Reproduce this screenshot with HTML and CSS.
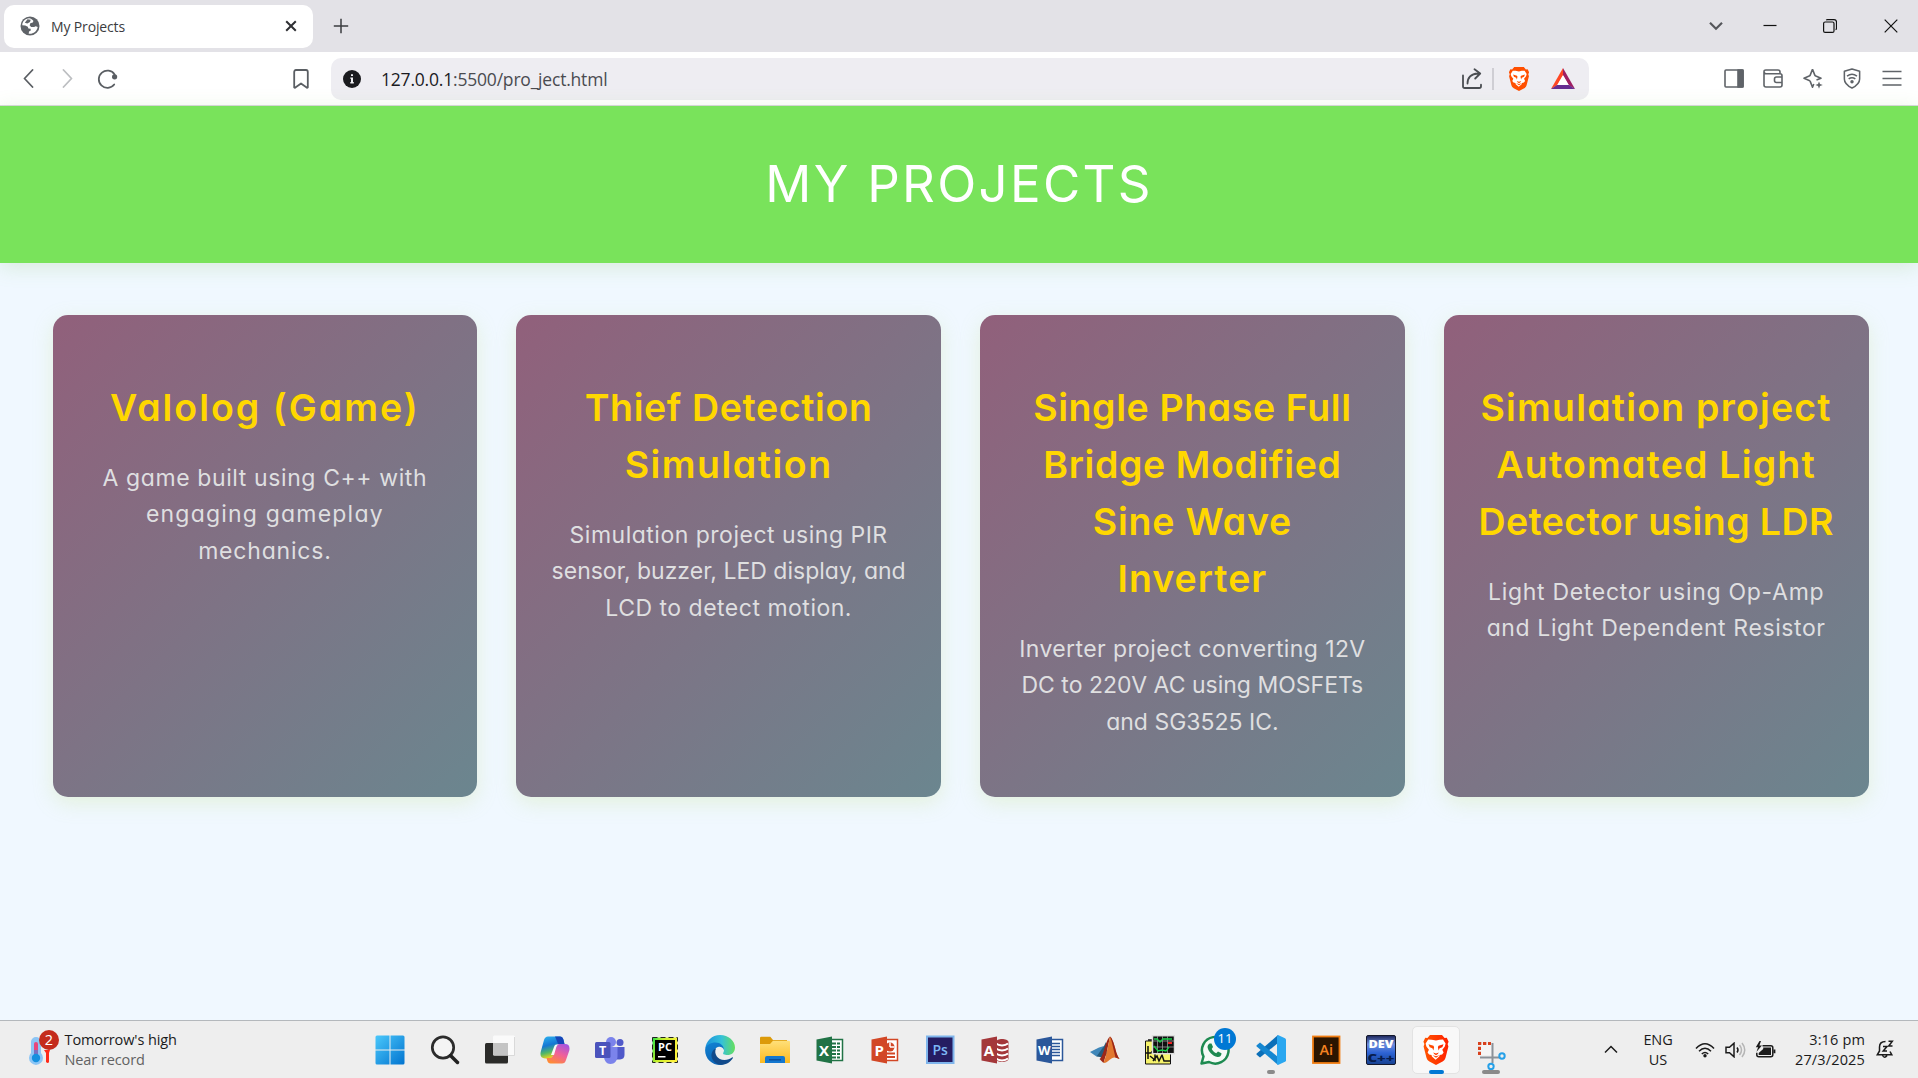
FILE: index.html
```html
<!DOCTYPE html>
<html lang="en">
<head>
<meta charset="utf-8">
<title>My Projects</title>
<link rel="stylesheet" href="styles.css">
</head>
<body>
<svg class="defs" width="0" height="0" aria-hidden="true">
  <defs>
    <linearGradient id="gBrave" x1="0" x2="1"><stop offset="0" stop-color="#ff5500"/><stop offset="1" stop-color="#ff2000"/></linearGradient>
    <symbol id="lion" viewBox="0 0 26 30">
      <path d="M7 0h12l2.600 3 2.200-.3 1.800 4-1 2.300.8 2.600-2.800 11c-.5 2-1.600 3-3 4L13 30l-6.600-3.400c-1.400-1-2.500-2-3-4L.6 11.600 1.400 9l-1-2.300 1.800-4 2.200.3z"/>
      <path fill="#fff" d="M13 5.500l3.500-.7 3.500-.2 2.600 4-.8 3-2.500 3.200 1.300 2.700-1.500 2-2.400.4-.4 1.600-3.700 3.300-3.700-3.300-.4-1.600-2.400-.4-1.500-2 1.300-2.700-2.500-3.200-.8-3 2.600-4 3.500.2z"/>
      <path d="M5.500 9.300l5 1.500.6 1.500-.7 3.200-1-2.200-2.700-1zM20.500 9.300l-5 1.500-.6 1.500.7 3.200 1-2.200 2.700-1zM10.200 17.500l2.800 1 2.800-1-1 1.500-1.800 1.300-1.800-1.300zM9.500 20.200l3.500 1 3.500-1-3.500 2.600z"/>
    </symbol>
  </defs>
</svg>

<div class="window">
  <header class="tabstrip">
    <div class="tab">
      <svg class="globe" viewBox="0 0 20 20"><circle cx="10" cy="10" r="9.500" fill="#5f6368"/><path fill="#fff" d="M9 2.300C6 2.600 3.400 4.500 2.400 7.400L2.200 9.300l3 .2 2.600 1.300.6 1.700 2.200.3.200 1.700-1.800 1-.3 2.200c4.300.6 8.200-2.300 9-6.700l-2-.8-1.600.9-3-.1-1.500-1.800.9-2.200 2-.3 1-1.600C12.400 3.600 11 2.500 9 2.300z"/><path fill="#5f6368" d="M7.500 3.200l3.200.5-.7 2.400-2.600 1.400-2.600-.8z"/></svg>
      <span class="tab-title">My Projects</span>
      <svg class="tab-close" viewBox="0 0 12 12"><path d="M1.200 1.200l9.600 9.600M10.800 1.200l-9.600 9.600"/></svg>
    </div>
    <svg class="new-tab" viewBox="0 0 16 16"><path d="M8 .8v14.400M.8 8h14.400"/></svg>
    <div class="window-buttons">
      <svg viewBox="0 0 14 14"><path class="thick" d="M1 3.800l6 6 6-6"/></svg>
      <svg viewBox="0 0 14 14"><path d="M.5 6.500h13"/></svg>
      <svg viewBox="0 0 14 14"><rect x=".6" y="3" width="10.400" height="10.400" rx="1.500"/><path d="M3.300 1.200Q3.600.6 4.500.6h6.500q2.500 0 2.500 2.500v6.200q0 1-.9 1.400"/></svg>
      <svg viewBox="0 0 14 14"><path d="M.7.7l12.600 12.600M13.300.7L.7 13.300"/></svg>
    </div>
  </header>

  <nav class="toolbar">
    <div class="nav-left">
      <svg class="i-back" viewBox="0 0 11 19"><path d="M9.500 1L1.500 9.500l8 8.500"/></svg>
      <svg class="i-fwd" viewBox="0 0 11 19"><path d="M1.500 1l8 8.500-8 8.500"/></svg>
      <svg class="i-reload" viewBox="0 0 21 20"><path d="M17.200 15.500A8.600 8.600 0 1 1 17.600 5.500"/><circle cx="17.600" cy="7.800" r="2.600"/></svg>
      <svg class="i-bookmark" viewBox="0 0 16 20"><path d="M1.200 18.500V3Q1.200 1 3 1h10q1.800 0 1.800 2v15.500l-.8.300L8 14.500 2 18.800z"/></svg>
    </div>
    <div class="address">
      <svg class="i-info" viewBox="0 0 18 18"><circle cx="9" cy="9" r="9" fill="#1b1b1f"/><path fill="#f0f0f4" d="M8 4.300h2v1.800H8zM7.300 7.500H10v4.600h.8v1.300H7.300v-1.300H8V8.800h-.7z"/></svg>
      <span class="url"><b>127.0.0.1</b>:5500/pro_ject.html</span>
      <svg class="i-share" viewBox="0 0 21 21"><path d="M1 7.500v10.700Q1 20 2.800 20h14.400q1.800 0 1.800-1.800v-1.500M5.500 15.500c0-6 3.500-9.500 10.500-10M12.500 1.200l5.700 4.300-5 5"/></svg>
      <i class="divider"></i>
      <svg class="i-lion" viewBox="0 0 26 30"><use href="#lion"/></svg>
      <svg class="i-bat" viewBox="0 0 24 21"><path fill="#ff4724" d="M12 0v7.500L6.500 17 0 21z"/><path fill="#9e1f63" d="M12 0l12 21-6.500-4L12 7.500z"/><path fill="#662d91" d="M0 21l6-4h12l6 4z"/><path fill="#fff" d="M12 7l5.800 10H6.200z"/></svg>
    </div>
    <div class="nav-right">
      <svg viewBox="0 0 20 20"><rect x="1" y="1.500" width="18" height="17" rx="1"/><path d="M14 1.500h5v17h-5z" fill="#5f6368"/></svg>
      <svg viewBox="0 0 20 20"><path d="M1 3.500v13Q1 18.500 3 18.500h14q2 0 2-2V7.200q0-2-2-2H3Q1 5.200 1 3.300T3 1.500h12q2 0 2 2v1.700M19 8.500h-5.500q-2 0-2 2v1.500q0 2 2 2H19"/></svg>
      <svg viewBox="0 0 20 20"><path d="M9.500.8l2.200 5.600q.3.800 1.100 1.200L18 9.800l-4.500 1.600M9.500.8L7.300 6.400Q7 7.200 6.200 7.600L1 9.800l5.200 2.100q.8.400 1.100 1.200l2.200 5.600 1.300-3.200"/><path class="solid" d="M16 13l1 2.500 2.800 1-2.800 1-1 2.700-1-2.700-2.700-1 2.700-1z"/></svg>
      <svg viewBox="0 0 20 22"><path d="M10 1l8 2.500v8c0 5-4 7.500-8 9.500-4-2-8-4.500-8-9.500v-8zM4.800 8.500q5.200-4 10.400 0M6.500 11.500q3.500-2.600 7 0"/><circle class="solid" cx="10" cy="14.500" r="1.800"/></svg>
      <svg viewBox="0 0 20 20"><path d="M.5 3h19M.5 10h19M.5 16.500h19"/></svg>
    </div>
  </nav>

  <main class="page">
    <div class="banner"><h1>MY PROJECTS</h1></div>
    <section class="cards">
      <article class="card">
        <h2><span class="track-20">Valolog (Game)</span></h2>
        <p><span class="track-6">A game built using C++ with</span><span class="track-12">engaging gameplay</span><span class="track-8">mechanics.</span></p>
      </article>
      <article class="card">
        <h2><span class="track-6">Thief Detection</span><span class="track-15">Simulation</span></h2>
        <p><span class="track-5">Simulation project using PIR</span><span>sensor, buzzer, LED display, and</span><span class="track-5">LCD to detect motion.</span></p>
      </article>
      <article class="card">
        <h2><span class="track-6">Single Phase Full</span><span class="track-6">Bridge Modified</span><span class="track-8">Sine Wave</span><span class="track-10">Inverter</span></h2>
        <p><span class="track-4">Inverter project converting 12V</span><span>DC to 220V AC using MOSFETs</span><span>and SG3525 IC.</span></p>
      </article>
      <article class="card">
        <h2><span class="track-12">Simulation project</span><span class="track-12">Automated Light</span><span class="track-4">Detector using LDR</span></h2>
        <p><span class="track-7">Light Detector using Op-Amp</span><span class="track-6">and Light Dependent Resistor</span></p>
      </article>
    </section>
  </main>

  <footer class="taskbar">
    <div class="weather">
      <svg viewBox="0 0 32 36">
        <path fill="#8cc5f5" d="M3 12a5 5 0 0 1 10 0v11a7 7 0 1 1-10 0z"/>
        <path fill="#e8467c" d="M6 14a2 2 0 0 1 4 0v12H6z"/><path fill="#7a6fc0" d="M6 20h4v6H6z"/><circle cx="8" cy="28" r="4.200" fill="#1490df"/>
        <path fill="#ff2a1a" d="M16 20h6l-1 3v9q-1 2-3 0v-9z"/>
        <circle cx="21" cy="10" r="10" fill="#c42b1c"/>
        <text x="21" y="15" font-size="14.500" fill="#fff" text-anchor="middle">2</text>
      </svg>
      <div class="weather-text"><span>Tomorrow's high</span><span class="muted">Near record</span></div>
    </div>

    <div class="apps">
      <div class="app"><svg viewBox="0 0 30 30"><defs><linearGradient id="gWin" x1="0" y1="0" x2="30" y2="30" gradientUnits="userSpaceOnUse"><stop offset="0" stop-color="#4cc9fb"/><stop offset="1" stop-color="#0072cf"/></linearGradient></defs><path fill="url(#gWin)" d="M.5 2q0-1.500 1.500-1.500h12.500v14H.5zM15.500.5H28q1.500 0 1.500 1.500v12.500h-14zM.5 15.500h14v14H2q-1.500 0-1.500-1.500zM15.500 15.500h14V28q0 1.500-1.500 1.500H15.500z"/></svg></div>
      <div class="app"><svg viewBox="0 0 30 30"><circle cx="13" cy="12.500" r="10.700" fill="#f4f4f4" stroke="#2c2c2c" stroke-width="2.700"/><path d="M20.500 20.500l7 7" stroke="#222" stroke-width="3.500" stroke-linecap="round"/></svg></div>
      <div class="app"><svg viewBox="0 0 30 30"><rect y="8" width="23" height="20.500" rx="1.500" fill="#2b2b29"/><rect x="8" y=".5" width="22" height="20" rx="1.500" fill="#fafafa"/><path fill="#c4c4c4" d="M8 8h15v12.500H9.500Q8 20.500 8 19z"/><path fill="none" stroke="#d9d9d9" d="M23 20.500h6.500V2"/></svg></div>
      <div class="app"><svg viewBox="0 0 30 28"><defs><linearGradient id="gC1" x1="0" y1="0" x2=".3" y2="1"><stop offset="0" stop-color="#2fb6f0"/><stop offset=".45" stop-color="#1577d4"/><stop offset=".75" stop-color="#52b865"/><stop offset="1" stop-color="#f2d41c"/></linearGradient><linearGradient id="gC2" x1=".8" y1="0" x2=".3" y2="1"><stop offset="0" stop-color="#a455e0"/><stop offset=".5" stop-color="#f0609a"/><stop offset="1" stop-color="#ff8b35"/></linearGradient></defs><path fill="url(#gC1)" d="M8 .5h12q2.500 0 3.400 3l1.200 5H19q-2 0-2.700 2.500L13 20q-1 2.500-3 2.500H5Q-.5 22.500.7 16L4 4Q5 .5 8 .5z"/><path fill="#1746b8" d="M15 .5h5q2.500 0 3.400 3l1.200 5H19q-1.500 0-1.500-2z"/><path fill="url(#gC2)" d="M22 27.500H10.500q-2.500 0-3.300-3L6.500 22H10q2.200 0 3-2.500L16.500 10q.7-2 2.500-2h6q5.500 0 4.300 6.500L26 24q-1 3.500-4 3.500z"/><path fill="#f8f8f8" d="M16 8.500h3q-2 0-2.700 2.500L14 19h-3l3-8q.6-2.500 2-2.500z"/></svg></div>
      <div class="app"><svg viewBox="0 0 30 28"><circle cx="25" cy="6.500" r="3.500" fill="#5059c9"/><path fill="#5059c9" d="M20 11h9.500v8q0 4-4.500 4.500h-4z"/><circle cx="16" cy="6" r="5" fill="#7b83eb"/><path fill="#7b83eb" d="M9 11h13.500v9c0 4.500-3 8-7 8s-6.500-3.500-6.500-8z"/><rect y="6" width="15.500" height="16" rx="1.500" fill="#4b53bc"/><text x="7.700" y="18.500" font-size="12.500" font-weight="700" fill="#fff" text-anchor="middle">T</text></svg></div>
      <div class="app"><svg viewBox="0 0 30 30"><defs><linearGradient id="gPc" x2="1" y2=".3"><stop offset="0" stop-color="#21e04a"/><stop offset=".4" stop-color="#c4ee2b"/><stop offset="1" stop-color="#fcf23a"/></linearGradient></defs><rect x="2.500" y="2.500" width="25" height="25" fill="url(#gPc)" stroke="#222" stroke-dasharray="5 3"/><rect x="5" y="5" width="20" height="20"/><text x="15" y="15.500" font-size="11" font-weight="700" fill="#fff" text-anchor="middle">PC</text><path fill="#fff" d="M8 21h7.500v1.500H8z"/></svg></div>
      <div class="app"><svg viewBox="0 0 30 30"><defs><linearGradient id="gE1" x1="0" x2="1" y1=".3" y2=".3"><stop offset="0" stop-color="#1a91dc"/><stop offset=".55" stop-color="#35c1d8"/><stop offset="1" stop-color="#66df5d"/></linearGradient><linearGradient id="gE2" y2="1" x2=".3"><stop offset="0" stop-color="#1183d4"/><stop offset="1" stop-color="#0c64b5"/></linearGradient></defs><path fill="url(#gE1)" d="M.3 13.500C1 6 7 0 15 0c8.500 0 15 6 15 12.500 0 5-3.500 7.500-7.500 7.500-3.300 0-5-1-4.200-2.300 2.300-4-1-7.200-5-7.200C8 10.500 3 11 .3 13.500z"/><path fill="url(#gE2)" d="M.1 15C.3 10 6 7.500 10.500 7.500c5 0 8.700 3.500 8.500 7.500-1-2.500-3-3.500-5-3.300-4 .3-5.500 5-4.500 9 1.200 4.800 4.500 7.800 9 9C8.500 31.500 0 24.500.1 15z"/><path fill="#114a8b" d="M11 13.500c-2.500 5 1.500 11.500 8.500 11.500 3 0 5.500-1 7.500-2.500.7-.5 1.200.2.800.8-2.300 3.800-6.500 6.500-11.500 6.500-7 0-12-7.500-9-13 .8-1.600 2-2.700 3.700-3.300z"/></svg></div>
      <div class="app"><svg viewBox="0 0 30 28"><defs><linearGradient id="gF" y2="1" x2="0"><stop offset="0" stop-color="#ffe07a"/><stop offset="1" stop-color="#fcb91f"/></linearGradient></defs><path fill="#dc9a0a" d="M0 2Q0 .7 1.300.7h9L13 4h14v6H0z"/><path fill="url(#gF)" d="M0 8h10l3-3.300h15.700Q30 4.700 30 6v20.500Q30 27 29 27H0z"/><path fill="#1377cf" d="M5 27v-5q0-2 2-2h16q2 0 2 2v5z"/><path fill="#0a4f9c" d="M9 23h12v1.500H9z"/></svg></div>
      <div class="app"><svg viewBox="0 0 30 30"><path fill="#fff" stroke="#217346" stroke-width="1.500" d="M15 4.500h12.500v21H15z"/><path stroke="#217346" stroke-width="2" d="M17 8.500h8M17 12h8M17 15.500h8M17 19h8M17 22.500h8"/><path stroke="#fff" d="M21.500 7v17"/><path fill="#217346" d="M1.500 4.500L17 1.500v27l-15.500-3z"/><text x="9" y="20.500" font-size="15" font-weight="700" fill="#fff" text-anchor="middle">X</text></svg></div>
      <div class="app"><svg viewBox="0 0 30 30"><path fill="#fff" stroke="#d24726" stroke-width="1.500" d="M15 4.500h12.500v21H15z"/><circle cx="20" cy="12" r="4.500" fill="#d24726"/><path d="M20 12V7.500M20 12h4.500" stroke="#fff" stroke-width="1.500"/><path stroke="#d24726" stroke-width="2" d="M17 18.500h8M17 22h8"/><path fill="#d24726" d="M1.500 4.500L17 1.500v27l-15.500-3z"/><text x="9.300" y="20.500" font-size="15" font-weight="700" fill="#fff" text-anchor="middle">P</text></svg></div>
      <div class="app"><svg viewBox="0 0 30 30"><rect x="2" y="1.500" width="26.500" height="26.500" fill="#251d62" stroke="#7fb5ec" stroke-width="2"/><text x="15.200" y="19.500" font-size="14" font-weight="600" fill="#7db8f5" text-anchor="middle">Ps</text></svg></div>
      <div class="app"><svg viewBox="0 0 30 30"><path fill="#a4373a" d="M16 7c0-4 12-4 12.500 0v17c-.5 4-12.500 4-12.500 0z"/><path fill="none" stroke="#fff" stroke-width="2" d="M16 8.500c3 2.500 9 2.500 12 0M16 13.500c3 2.500 9 2.500 12 0M16 18.500c3 2.500 9 2.500 12 0M16 23.500c3 2.500 9 2.500 12 0"/><path fill="#a4373a" d="M1.500 4.500L17 1.500v27l-15.500-3z"/><text x="9" y="20.500" font-size="15" font-weight="700" fill="#fff" text-anchor="middle">A</text></svg></div>
      <div class="app"><svg viewBox="0 0 30 30"><path fill="#fff" stroke="#2b579a" stroke-width="1.500" d="M15 4.500h12.500v21H15z"/><path stroke="#2b579a" stroke-width="1.500" d="M17 8.500h8M17 11.500h8M17 14.500h8M17 17.500h8M17 20.500h8"/><path fill="#2b579a" d="M1.500 4.500L17 1.500v27l-15.500-3z"/><text x="9.200" y="20" font-size="13" font-weight="700" fill="#fff" text-anchor="middle">W</text></svg></div>
      <div class="app"><svg viewBox="0 0 30 30"><path fill="#3f86b8" d="M0 17l9-4.500 5-1.500-4 9-3.500 1.500z"/><path fill="#245b7e" d="M6.500 21.500L14 11l2-4 1 12-4 4.500-3-1.500z"/><path fill="#9b2718" d="M9.500 24c2-1 3.500-6 5-10.500C16 8 18 3 20 1.500c-1 5-3 16-6.500 26.500z"/><path fill="#e2782f" d="M20 1.500c2 1.500 4.500 9 5.500 13 1 4 2.500 7.500 4 9.500-3-1-5-2.500-8-.5-2.500 1.500-5 5-8 4.500C16 22 18.500 9 20 1.500z"/><path fill="#9b2718" d="M20 1.500c2.500 1.500 4.500 9 5.500 13 1 4 2.500 7.500 4 9.500l-4-1.500c-2-7-3-15-5.500-21z"/></svg></div>
      <div class="app"><svg viewBox="0 0 30 30"><path fill="#f6f36b" stroke="#111" d="M.5 6h25v23H.5z"/><path fill="none" stroke="#111" stroke-width="1.500" d="M3 11v13M0 18h6l4-5v12l-5-4M8 26l4-5 2 5 3-6 2 6h6M3 5h4"/><rect x="7.500" y=".7" width="22" height="18" fill="#111" stroke="#ddd" stroke-width="1.500"/><path stroke="#999" stroke-width=".8" d="M12.500 1v17M17.500 1v17M22.500 1v17M8 6h21M8 12h21"/><path fill="none" stroke="#19d24a" stroke-width="1.300" d="M9 4h3l3 3 3-3h9M9 11l4 5 4-1 4 1 3-4"/><path stroke="#e22" stroke-width="2" d="M23 8h4"/></svg></div>
      <div class="app"><svg viewBox="0 0 30 30"><path fill="#f4faf6" stroke="#1d8a50" stroke-width="2.500" stroke-linejoin="round" d="M1.500 28.500l2-7A13.300 13.300 0 1 1 9 27z"/><path fill="#1d8a50" d="M9.500 8.500h2l1.500 3.500-1.300 2c1 2 2.500 3.300 4.500 4.200l1.800-1.700 3.500 1.700c0 2.500-1.500 4-4 3.800C12.500 21.300 8 16 7.500 12q0-2.500 2-3.500z"/></svg><span class="badge">11</span></div>
      <div class="app idle"><svg viewBox="0 0 30 30"><path fill="#0b6fb8" d="M22 0v8L4 22.500l-3.300-2.800q-.5-.6 0-1.200z"/><path fill="#1587d1" d="M22 30v-8L4 7.500.7 10.300q-.5.600 0 1.200z"/><path fill="#2aa7f0" d="M22 0l7 3.300q1 .5 1 1.500v20.400q0 1-1 1.500L22 30l-1-1.500v-27z"/></svg></div>
      <div class="app"><svg viewBox="0 0 30 30"><rect x="2" y="1.500" width="26.500" height="26.500" fill="#2b1500" stroke="#f07c10" stroke-width="1.800"/><text x="15.200" y="19.500" font-size="14.500" font-weight="600" fill="#f58220" text-anchor="middle">Ai</text></svg></div>
      <div class="app"><svg viewBox="0 0 30 30"><defs><linearGradient id="gD" x2="0" y2="1"><stop offset="0" stop-color="#1a2458"/><stop offset=".3" stop-color="#6f8ddd"/><stop offset=".6" stop-color="#2d63d4"/><stop offset="1" stop-color="#16408f"/></linearGradient></defs><rect x=".5" y=".5" width="29" height="29" rx="1.500" fill="url(#gD)" stroke="#14182c"/><text x="15" y="12.500" font-size="10.500" font-weight="800" fill="#fff" text-anchor="middle" textLength="25" lengthAdjust="spacingAndGlyphs">DEV</text><text x="15" y="26.500" font-size="10.500" font-weight="800" fill="#071c4c" text-anchor="middle" textLength="27" lengthAdjust="spacingAndGlyphs">C++</text></svg></div>
      <div class="app active"><svg class="app-lion" viewBox="0 0 26 30"><use href="#lion"/></svg></div>
      <div class="app running"><svg viewBox="0 0 30 30"><path fill="#f5f5f5" d="M4 4h11v11H4z"/><path fill="none" stroke="#d8401c" stroke-width="3" stroke-dasharray="3.300 1.700" d="M3.500 15V3.500H15"/><path fill="none" stroke="#8b9299" stroke-width="2" d="M16.500 3v20M4 17.500h19"/><circle cx="26" cy="16" r="2.700" fill="none" stroke="#25a0e8" stroke-width="2"/><circle cx="15" cy="26.500" r="2.700" fill="none" stroke="#25a0e8" stroke-width="2"/></svg></div>
    </div>

    <div class="tray">
      <svg class="t-up" viewBox="0 0 14 9"><path d="M1 7.500l6-6 6 6"/></svg>
      <div class="lang"><span>ENG</span><span>US</span></div>
      <svg class="t-wifi" viewBox="0 0 20 16"><path d="M1 6.500q9-9.500 18 0M4 9.200q6-6 12 0M6.800 12q3.200-3 6.400 0"/><circle cx="10" cy="13.800" r="1.700"/></svg>
      <svg class="t-vol" viewBox="0 0 21 16"><path d="M1 5.300h3.500L9 1.200v13.600l-4.500-4.100H1z"/><path d="M12 5.500q2 2.500 0 5"/><path class="faint" d="M14.500 3q4 5 0 10M17 1q5.500 7 0 14"/></svg>
      <svg class="t-bat" viewBox="0 0 21 18"><path d="M7.500 4.700h8.300q2 0 2 2v7q0 2-2 2H3.800q-2 0-2-2v-2"/><path class="fill" d="M8.200 6.500h7.800v7.400H3.700v-2L8.200 8z"/><path class="fill" d="M18.500 8.500h1.900v3.800h-1.900zM4.500 0L.8 6.200h2.300L1.500 10.800 7 4.600H4.400L6 0z"/></svg>
      <div class="clock"><span>3:16 pm</span><span>27/3/2025</span></div>
      <svg class="t-bell" viewBox="0 0 18 19"><path d="M9.500 1.500C5.500 1.500 3.500 4 3.500 7v4L1.300 14.800h14.500L14 11.500M6.500 15.500q2 3.500 4.500 0M7 6.500h4L7.200 11H11M12.500 1.200h3.800L12.700 6h3.800"/></svg>
    </div>
  </footer>
</div>
</body>
</html>
```
FILE: styles.css
```css
* { box-sizing: border-box; }
body {
  margin: 0;
  font-family: "Open Sans", "Noto Sans", sans-serif;
  color: #1b1b1b;
}
svg { display: block; flex: none; }
.defs { position: absolute; }
.window {
  width: 1918px;
  height: 1078px;
  display: flex;
  flex-direction: column;
  overflow: hidden;
}

/* Tab strip */
.tabstrip {
  height: 52px;
  flex: none;
  display: flex;
  align-items: center;
  background: #e3e2e7;
  padding-left: 4px;
}
.tab {
  width: 309px;
  height: 43px;
  display: flex;
  align-items: center;
  padding: 0 16px;
  border-radius: 10px;
  background: #fff;
}
.globe { width: 20px; height: 20px; }
.tab-title {
  margin-left: 11px;
  flex: 1;
  font-size: 14px;
  letter-spacing: -0.15px;
  color: #3b3c40;
}
.tab-close { width: 12px; height: 12px; }
.tab-close path { stroke: #2e2f33; stroke-width: 2; }
.new-tab { width: 16px; height: 16px; margin-left: 19.500px; }
.new-tab path { stroke: #3b3c40; stroke-width: 1.5; }
.window-buttons {
  display: flex;
  gap: 46.500px;
  margin-left: auto;
  padding-right: 20.500px;
}
.window-buttons svg { width: 14px; height: 14px; }
.window-buttons svg:first-child { margin-right: -7px; }
.window-buttons path, .window-buttons rect { fill: none; stroke: #111; stroke-width: 1.2; }
.window-buttons .thick { stroke: #55565b; stroke-width: 2.2; }

/* Toolbar */
.toolbar {
  height: 54px;
  flex: none;
  display: flex;
  align-items: center;
  border-bottom: 1px solid #d9d9dd;
  background: #fff;
}
.nav-left { width: 331px; display: flex; align-items: center; padding-left: 23px; }
.nav-left path { fill: none; stroke: #5a5e63; stroke-width: 1.8; stroke-linecap: round; stroke-linejoin: round; }
.nav-left circle { fill: #5a5e63; }
.i-back, .i-fwd { width: 11px; height: 19px; }
.i-fwd { margin-left: 28px; }
.nav-left .i-fwd path { stroke: #bcbec1; }
.i-reload { width: 21px; height: 20px; margin-left: 24px; }
.i-bookmark { width: 16px; height: 20px; margin-left: 175px; }
.address {
  width: 1258px;
  height: 42px;
  display: flex;
  align-items: center;
  padding: 0 14px 0 12px;
  border-radius: 10px;
  background: #eeedf2;
}
.i-info { width: 18px; height: 18px; }
.url { margin: 1px 0 0 20px; flex: 1; font-size: 17.500px; letter-spacing: -0.2px; color: #4a4b50; }
.url b { font-weight: 400; color: #1b1b1f; }
.i-share { width: 21px; height: 21px; }
.i-share path { fill: none; stroke: #4a4d52; stroke-width: 1.8; stroke-linecap: round; stroke-linejoin: round; }
.divider { width: 2px; height: 22px; margin: 0 14px 0 9px; background: #cfced4; }
.i-lion { width: 22px; height: 24px; fill: #ff4f00; }
.i-bat { width: 24px; height: 21px; margin-left: 21px; }
.nav-right { display: flex; gap: 19.600px; margin-left: auto; padding-right: 16px; align-items: center; }
.nav-right svg { width: 20px; height: 21px; }
.nav-right path, .nav-right rect { fill: none; stroke: #5f6368; stroke-width: 1.6; stroke-linejoin: round; }
.nav-right svg:first-child path { fill: #5f6368; }
.nav-right .solid { fill: #5f6368; stroke: none; }

/* Web page */
.page {
  flex: 1;
  background: #f0f8ff;
  font-family: Inter, "Open Sans", sans-serif;
  font-feature-settings: "cv11";
}
.banner {
  height: 157px;
  padding-top: 39.500px;
  background: #79e35b;
  box-shadow: 0 4px 20px rgba(120, 190, 80, 0.2);
}
h1 {
  margin: 0;
  font-size: 51px;
  line-height: 76px;
  font-weight: 400;
  letter-spacing: 2.3px;
  text-align: center;
  color: #fff;
}
.cards {
  display: grid;
  grid-template-columns: repeat(4, 1fr);
  gap: 39px;
  padding: 52px 49.500px 0 52.500px;
}
.card {
  height: 482px;
  padding-top: 64px;
  border-radius: 15px;
  text-align: center;
  white-space: nowrap;
  background: linear-gradient(135deg, #91607b, #6b868f);
  box-shadow: 0 6px 20px rgba(190, 225, 120, 0.25);
}
.card span { display: block; }
.card h2 {
  margin: 0 0 24px;
  font-size: 37.500px;
  line-height: 57px;
  font-weight: 600;
  color: #ffd700;
}
.card p {
  margin: 0;
  font-size: 23px;
  line-height: 36.330px;
  color: #dfdfe0;
}

/* Per-line tracking */
.track-4 { letter-spacing: 0.4px; }
.track-5 { letter-spacing: 0.5px; }
.track-6 { letter-spacing: 0.6px; }
.track-7 { letter-spacing: 0.7px; }
.track-8 { letter-spacing: 0.8px; }
.track-10 { letter-spacing: 1px; }
.track-12 { letter-spacing: 1.2px; }
.track-15 { letter-spacing: 1.5px; }
.track-20 { letter-spacing: 2px; }

/* Taskbar */
.taskbar {
  height: 58px;
  flex: none;
  display: flex;
  align-items: center;
  border-top: 1px solid #b4b8bc;
  background: #eee;
}
.weather { width: 362px; display: flex; align-items: center; gap: 5px; padding-left: 27.500px; margin-top: -4px; }
.weather svg { width: 32px; height: 36px; }
.weather-text, .lang, .clock { display: flex; flex-direction: column; font-size: 14.500px; line-height: 20px; letter-spacing: -0.1px; }
.weather-text { margin-top: 4px; }
.muted { color: #626262; }
.apps { display: flex; }
.app { position: relative; width: 55.070px; height: 57px; display: flex; align-items: center; justify-content: center; }
.app svg { width: 30px; height: 30px; }
.app .app-lion { width: 26px; fill: url(#gBrave); }
.badge {
  position: absolute;
  left: 26px;
  top: 7px;
  width: 22px;
  height: 22px;
  border-radius: 50%;
  background: #0078d4;
  color: #fff;
  font-size: 13px;
  line-height: 21px;
  text-align: center;
}
.app.active::before {
  content: "";
  position: absolute;
  inset: 5px 3.500px 4px;
  border: 1px solid #e3e3e3;
  border-radius: 5px;
  background: #f8f8f8;
}
.app.active svg { position: relative; }
.app.idle::after, .app.active::after, .app.running::after {
  content: "";
  position: absolute;
  bottom: 4px;
  left: 50%;
  width: 8px;
  height: 4px;
  margin-left: -4px;
  border-radius: 2px;
  background: #8a8a8a;
}
.app.active::after { width: 15px; margin-left: -7px; background: #0078d4; }
.app.running::after { width: 18px; margin-left: -9px; }
.app.running svg { margin-top: 10px; }
.tray { display: flex; align-items: center; margin-left: auto; padding-right: 24px; }
.tray svg path, .tray svg rect { fill: none; stroke: #1b1b1b; stroke-width: 1.5; }
.tray svg circle { fill: #1b1b1b; }
.tray svg .fill { fill: #1b1b1b; stroke: none; }
.tray svg .faint { stroke: #b5b5b5; }
.lang { width: 30px; margin-left: 25px; text-align: center; }
.t-up { width: 14px; height: 9px; }
.t-wifi { width: 20px; height: 16px; margin-left: 22px; }
.t-vol { width: 21px; height: 16px; margin-left: 10px; }
.t-bat { width: 21px; height: 18px; margin-left: 9px; }
.clock { width: 75px; margin-left: 14px; text-align: right; letter-spacing: 0.15px; }
.t-bell { width: 18px; height: 19px; margin-left: 11px; }
```
